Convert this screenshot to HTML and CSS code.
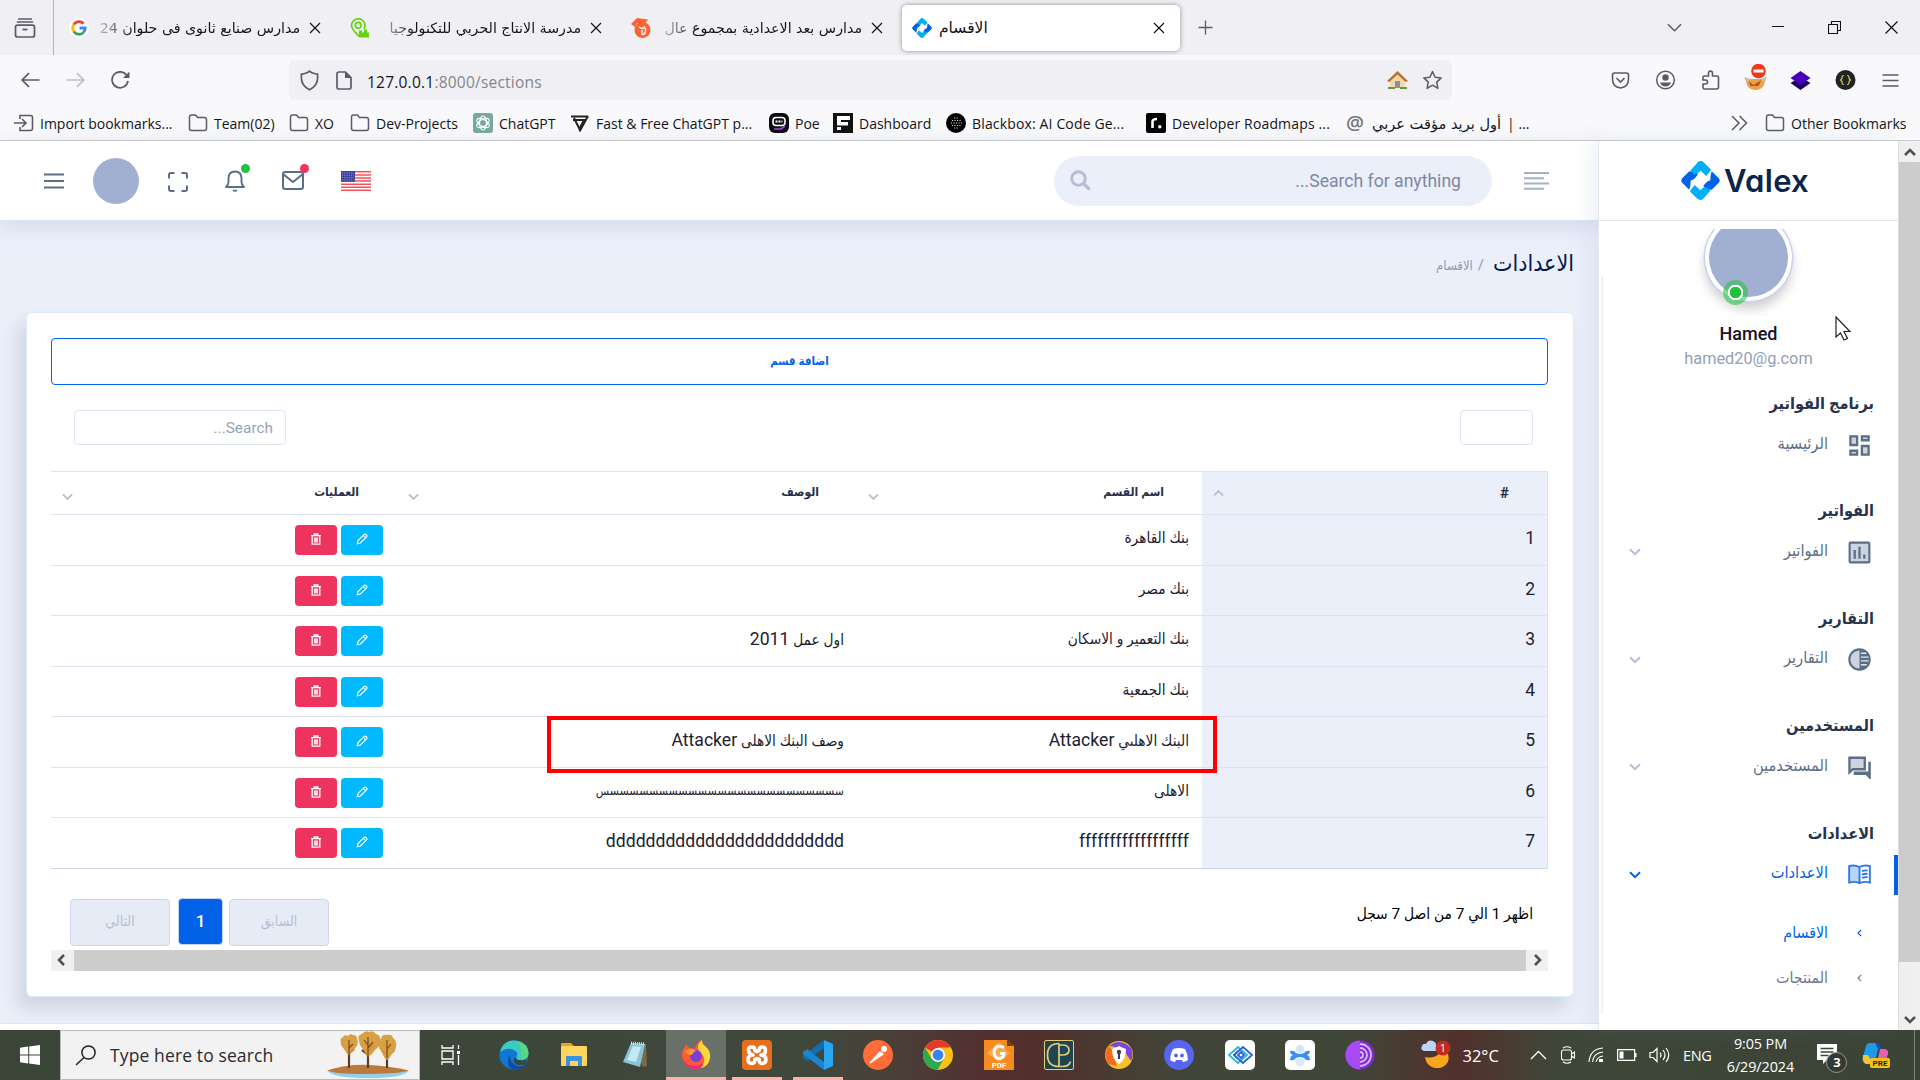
FILE: index.html
```html
<!DOCTYPE html>
<html lang="ar">
<head>
<meta charset="utf-8">
<title>الاقسام</title>
<link rel="stylesheet" href="styles.css">
</head>
<body>
<svg class="defs" width="0" height="0">
  <symbol id="x" viewBox="0 0 12 12"><path d="M1 1l10 10M11 1L1 11" fill="none" stroke="currentColor" stroke-width="1.2"/></symbol>
  <symbol id="folder" viewBox="0 0 20 20"><path d="M1.5 15.500V4.200Q1.500 2 3.700 2H7.500L9.500 4.500H16.300Q18.500 4.500 18.500 6.700V15.500Q18.500 17.500 16.300 17.500H3.700Q1.500 17.500 1.500 15.500Z" fill="none" stroke="#5b5b66" stroke-width="1.5"/></symbol>
  <symbol id="down" viewBox="0 0 12 8"><path d="M1 1.200l5 5 5-5" fill="none" stroke="currentColor" stroke-width="2"/></symbol>
  <symbol id="logo" viewBox="0 0 40 40"><path d="M20 0Q22 0 23.500 1.500L31 9 26 15.500 20 10 14 16 9.500 10 17 1.500Q18 0 20 0Z" fill="#00b0f2"/><path d="M20 40Q18 40 16.500 38.500L9 31 14 24.500 20 30 26 24 30.500 30 23 38.500Q22 40 20 40Z" fill="#00b0f2"/><path d="M8.500 10.500Q12 11 14 14Q17 12 17 14Q14 19 10 20Q10 25 8.500 29.500L1.500 22.500Q-1 20 1.500 17.500Z" fill="#0162e8"/><path d="M31.500 10.500L38.500 17.500Q41 20 38.500 22.500L31.500 29.500Q27 29 25 26.500Q23 27 23 25.500Q27 20 30 20Q30 14 31.500 10.500Z" fill="#0162e8"/></symbol>
  <symbol id="pencil" viewBox="0 0 12 12"><path d="M1.200 10.800l.8-3.200L8.200 1.400Q9 .7 9.800 1.400l.8.8Q11.300 3 10.600 3.800L4.400 10Z M7.400 2.400l2.200 2.200" fill="none" stroke="#fff" stroke-width="1.200"/></symbol>
  <symbol id="trash" viewBox="0 0 12 12"><path d="M1 2.600H11M4.200 2.400V1H7.800V2.400M2.200 2.800V11.200H9.800V2.800" fill="none" stroke="#fff" stroke-width="1.300"/><path d="M3.900 4.500h4.200v5H3.900z" fill="#fff" opacity=".85"/></symbol>
</svg>

<div class="tabs">
  <div class="firefox-view"><svg width="22" height="20" viewBox="0 0 22 20"><path d="M4 1h14M2.800 4h16.400M3.500 7.200h15q2 0 2 2v7.800q0 2-2 2h-15q-2 0-2-2V9.200q0-2 2-2z" fill="none" stroke="#5b5b66" stroke-width="1.700"/><path d="M8.500 11.500h5" stroke="#5b5b66" stroke-width="1.800"/></svg></div>
  <div class="tab">
    <svg class="fav" viewBox="0 0 20 20"><circle cx="10" cy="10" r="10" fill="#fff"/><g fill="none" stroke-width="2.800"><path d="M14.600 5.600A6.300 6.300 0 0 0 4.800 6.500" stroke="#ea4335"/><path d="M4.800 6.500A6.300 6.300 0 0 0 4.800 13.500" stroke="#fbbc05"/><path d="M4.800 13.500A6.300 6.300 0 0 0 14.200 14.700" stroke="#34a853"/><path d="M14.200 14.700Q16.300 13 16.200 10H10.500" stroke="#4285f4"/></g></svg>
    <span class="tab-text" dir="rtl">مدارس صنايع ثانوى فى حلوان 24</span><svg class="close"><use href="#x"/></svg>
  </div>
  <div class="tab">
    <svg class="fav" viewBox="0 0 20 20"><path d="M9 18.500C5 14 1.500 11 1.500 7.500a6.500 6.500 0 0 1 13.500 0q0 1.500-1 3.500" fill="none" stroke="#61d40c" stroke-width="1.700"/><circle cx="8.200" cy="7.300" r="2.900" fill="none" stroke="#61d40c" stroke-width="1.600"/><path d="M9 19.500v-7h3v2h2v-3h3v3h2v5z" fill="#61d40c"/></svg>
    <span class="tab-text" dir="rtl">مدرسة الانتاج الحربي للتكنولوجيا</span><svg class="close"><use href="#x"/></svg>
  </div>
  <div class="tab">
    <svg class="fav" viewBox="0 0 20 20"><circle cx="11.500" cy="12" r="8" fill="#fb6333"/><path d="M0 6L6 0l11 1.500-3 4-8-.5-2 4z" fill="#fb6333"/><path d="M8 8.500q3 4 6 0M11 12v5M14 10q2 4-2 7" fill="none" stroke="#f0f0f4" stroke-width="1.500"/></svg>
    <span class="tab-text" dir="rtl">مدارس بعد الاعدادية بمجموع عال</span><svg class="close"><use href="#x"/></svg>
  </div>
  <div class="tab tab-active">
    <svg class="fav"><use href="#logo"/></svg>
    <span class="tab-name">الاقسام</span><svg class="close"><use href="#x"/></svg>
  </div>
  <svg class="plus" viewBox="0 0 16 16"><path d="M8 .5v15M.5 8h15" stroke="#5b5b66" stroke-width="1.400"/></svg>
  <svg class="alltabs" viewBox="0 0 16 10"><path d="M1 1l7 7 7-7" fill="none" stroke="#5b5b66" stroke-width="1.500"/></svg>
  <div class="win">
    <svg width="12" height="12"><path d="M0 5.500h12" stroke="#111"/></svg>
    <svg width="13" height="13"><path d="M.5 3.500h9v9h-9zM3.500 3.500v-3h9v9h-3" fill="none" stroke="#111" stroke-width="1.100"/></svg>
    <svg width="13" height="13"><path d="M.5.5l12 12M12.500.5l-12 12" stroke="#111" stroke-width="1.200"/></svg>
  </div>
</div>

<div class="navbar">
  <div class="nav-buttons">
    <svg width="19" height="16" viewBox="0 0 19 16"><path d="M18.500 8H1.500M8 1.200L1.200 8 8 14.800" fill="none" stroke="#5b5b66" stroke-width="1.700"/></svg>
    <svg width="19" height="16" viewBox="0 0 19 16"><path d="M.5 8h17M11 1.200L17.800 8 11 14.800" fill="none" stroke="#bfbfc9" stroke-width="1.700"/></svg>
    <svg width="19" height="18" viewBox="0 0 19 18"><path d="M15.500 4A8 8 0 1 0 17 10" fill="none" stroke="#5b5b66" stroke-width="1.700"/><path d="M18.500.5V7h-6.500z" fill="#5b5b66"/></svg>
  </div>
  <div class="urlbar">
    <svg width="19" height="21" viewBox="0 0 19 21"><path d="M9.500 1.200Q12 3.600 17.600 4.200V8Q17.600 15.800 9.500 19.800Q1.400 15.800 1.400 8V4.200Q7 3.600 9.500 1.200Z" fill="none" stroke="#5b5b66" stroke-width="1.700"/></svg>
    <svg class="page-icon" width="16" height="19" viewBox="0 0 16 19"><path d="M3 1H9.500L15 6.500V16q0 2-2 2H3q-2 0-2-2V3Q1 1 3 1Z" fill="none" stroke="#5b5b66" stroke-width="1.700"/><path d="M9 1v6h6z" fill="#5b5b66"/></svg>
    <span class="url"><b>127.0.0.1</b>:8000/sections</span>
    <svg class="house" width="21" height="20" viewBox="0 0 21 20"><path d="M3 10v8h15v-8L10.500 3z" fill="#f3d9ad"/><path d="M0 11L10.500 1 21 11l-2.500 1L10.500 4.500 2.500 12z" fill="#b87333"/><path d="M8 18v-7h5v7z" fill="#8f8f98"/><path d="M1 17h7v2H1zM13 17h7v2h-7z" fill="#5f9e3c"/></svg>
    <svg width="21" height="20" viewBox="0 0 21 20"><path d="M10.500 1.500l2.600 5.700 6.100.7-4.500 4.200 1.200 6.200-5.400-3.100-5.400 3.100 1.200-6.200L1.800 7.900l6.100-.7z" fill="none" stroke="#5b5b66" stroke-width="1.500" stroke-linejoin="round"/></svg>
  </div>
  <div class="ext">
    <svg width="18" height="17" viewBox="0 0 18 17"><path d="M3 1h12q2 0 2 2v4q0 8-8 9-8-1-8-9V3q0-2 2-2zM5 6l4 4 4-4" fill="none" stroke="#5b5b66" stroke-width="1.600"/></svg>
    <svg width="20" height="20" viewBox="0 0 20 20"><circle cx="10" cy="10" r="8.800" fill="none" stroke="#5b5b66" stroke-width="1.500"/><circle cx="10" cy="7.500" r="3.200" fill="#5b5b66"/><path d="M4.500 12.500h11Q14 16.500 10 16.500T4.500 12.500z" fill="#5b5b66"/></svg>
    <svg width="18" height="20" viewBox="0 0 18 20"><path d="M7 6V3.500Q7 1 9 1t2 2.500V6h4.500q1.500 0 1.500 1.500V17q0 2-2 2H3q-1.500 0-1.500-1.500V14H4q2 0 2-2t-2-2H1.500V7.500Q1.500 6 3 6z" fill="none" stroke="#5b5b66" stroke-width="1.600"/></svg>
    <svg class="fox" width="24" height="26" viewBox="0 0 24 26"><path d="M1 13l5 2h12l5-2-3 9q-3 4-8 4t-8-4z" fill="#f0a04b"/><path d="M1 13l5 2-2 3zM23 13l-5 2 2 3z" fill="#c9c2b8"/><path d="M5 17l5 4 8-5-3 6H7z" fill="#a85b1d"/><circle cx="15" cy="7" r="7.300" fill="#f03a17"/><path d="M10 5.500h10v3H10z" fill="#fff"/></svg>
    <svg width="20" height="19" viewBox="0 0 20 19"><path d="M10 6l10 6-10 7-10-7z" fill="#1d0066"/><path d="M10 0l10 7-10 7L0 7z" fill="#4a00b8"/></svg>
    <svg width="20" height="20" viewBox="0 0 20 20"><circle cx="10" cy="10" r="10" fill="#1f2321"/><path d="M8.500 5.500q-2 0-2 1.500v1.500L5 10l1.500 1.500V13q0 1.500 2 1.500M11.500 5.500q2 0 2 1.500v1.500L15 10l-1.500 1.500V13q0 1.500-2 1.500" fill="none" stroke="#dcc84e" stroke-width="1.200"/></svg>
    <svg width="16" height="13" viewBox="0 0 16 13"><path d="M0 1h16M0 6.500h16M0 12h16" stroke="#5b5b66" stroke-width="1.500"/></svg>
  </div>
</div>

<div class="bookmarks">
  <div class="bm w1"><svg viewBox="0 0 20 20"><path d="M6 6V2.500h10.500q2 0 2 2v11q0 2-2 2H6V14M0 10h11M8 6l4 4-4 4" fill="none" stroke="#5b5b66" stroke-width="1.600"/></svg>Import bookmarks...</div>
  <div class="bm w2"><svg><use href="#folder"/></svg>Team(02)</div>
  <div class="bm w3"><svg><use href="#folder"/></svg>XO</div>
  <div class="bm w4"><svg><use href="#folder"/></svg>Dev-Projects</div>
  <div class="bm w5"><svg viewBox="0 0 20 20"><rect width="20" height="20" rx="3" fill="#74aa9c"/><g fill="none" stroke="#fff" stroke-width="1.100"><ellipse cx="10" cy="10" rx="3.500" ry="7"/><ellipse cx="10" cy="10" rx="3.500" ry="7" transform="rotate(60 10 10)"/><ellipse cx="10" cy="10" rx="3.500" ry="7" transform="rotate(120 10 10)"/></g></svg>ChatGPT</div>
  <div class="bm w6"><svg viewBox="0 0 20 20"><path d="M1 3.500h17M3 7h11L9.500 16 4 5M18 3L9.500 18.500" fill="none" stroke="#222" stroke-width="2"/></svg>Fast &amp; Free ChatGPT p...</div>
  <div class="bm w7"><svg viewBox="0 0 20 20"><rect width="20" height="20" rx="6" fill="#0b0b12"/><rect x="4" y="4.500" width="12" height="8" rx="3" fill="none" stroke="#fff" stroke-width="1.600"/><path d="M6.500 8.500h7" stroke="#fff" stroke-width="2" stroke-dasharray="2 1"/><path d="M5 16h7l4-3" stroke="#a04be0" stroke-width="1.700" fill="none"/></svg>Poe</div>
  <div class="bm w8"><svg viewBox="0 0 20 20"><path fill="#111" d="M0 0h20v20H0z"/><path d="M4 3h13v4H8v2h7v3.500H4zM4 14h4v3H4z" fill="#fff"/></svg>Dashboard</div>
  <div class="bm w9"><svg viewBox="0 0 20 20"><circle cx="10" cy="10" r="10" fill="#000"/><path d="M6 7.500h9M5 10h11M6 12.500h9M8 5h5M8 15h5" stroke="#ddd" stroke-width="1.100" stroke-dasharray="1.100 1.400"/></svg>Blackbox: AI Code Ge...</div>
  <div class="bm w10"><svg viewBox="0 0 20 20"><rect width="20" height="20" rx="2" fill="#000"/><path d="M6.500 15V8.500Q6.500 6 11 6" fill="none" stroke="#fff" stroke-width="2.600"/><circle cx="13.800" cy="13.800" r="1.700" fill="#fff"/></svg>Developer Roadmaps ...</div>
  <div class="bm w11"><span class="at">@</span><span class="bm-ar">أول بريد مؤقت عربي</span><span>| ...</span></div>
  <svg class="more" viewBox="0 0 17 16"><path d="M1 1l7 7-7 7M8.500 1l7 7-7 7" fill="none" stroke="#5b5b66" stroke-width="1.500"/></svg>
  <div class="bm"><svg><use href="#folder"/></svg>Other Bookmarks</div>
</div>

<div class="page">
  <div class="left">
    <header class="topbar">
      <svg width="20" height="16" viewBox="0 0 20 16"><path d="M0 1.500h20M0 8h20M0 14.500h20" stroke="#5b6e88" stroke-width="2"/></svg>
      <div class="avatar-sm"></div>
      <svg class="t-full" width="20" height="20" viewBox="0 0 20 20"><path d="M1 6.500V3q0-2 2-2h3.500M13.500 1H17q2 0 2 2v3.500M19 13.500V17q0 2-2 2h-3.500M6.500 19H3q-2 0-2-2v-3.500" fill="none" stroke="#5b6e88" stroke-width="2"/></svg>
      <div class="t-bell"><svg width="20" height="22" viewBox="0 0 20 22"><path d="M1 17h18q-2.500-2-2.500-5V8.500q0-7-6.500-7t-6.500 7V12q0 3-2.500 5zM8 20.200q2 1.300 4 0" fill="none" stroke="#5b6e88" stroke-width="1.900" stroke-linejoin="round"/></svg><i class="dot green"></i></div>
      <div class="t-mail"><svg width="22" height="19" viewBox="0 0 22 19"><path d="M3 1h16q2 0 2 2v13q0 2-2 2H3q-2 0-2-2V3q0-2 2-2zM1 3l10 8L21 3" fill="none" stroke="#5b6e88" stroke-width="2"/></svg><i class="dot pink"></i></div>
      <svg class="t-flag" width="30" height="20" viewBox="0 0 30 20"><path fill="#fff" d="M0 0h30v20H0z"/><path d="M0 .8h30M0 3.900h30M0 7h30M0 10.100h30M0 13.200h30M0 16.300h30M0 19.300h30" stroke="#fa4f55" stroke-width="1.500"/><path fill="#40439a" d="M0 0h14v10.800H0z"/><path d="M1 2h12M1 4.300h12M1 6.600h12M1 8.900h12" stroke="#a9abdb" stroke-width=".8" stroke-dasharray="1 1.300"/></svg>
      <div class="search-pill">
        <svg width="21" height="21" viewBox="0 0 21 21"><circle cx="8.500" cy="8.500" r="6.800" fill="none" stroke="#b4bdd3" stroke-width="3"/><path d="M13 13l6.500 6.500" stroke="#b4bdd3" stroke-width="3.400"/></svg>
        <span>...Search for anything</span>
      </div>
      <svg class="t-lines" width="25" height="18" viewBox="0 0 25 18"><path d="M0 1h25M0 6.300h20M0 11.500h25M0 16.800h20" stroke="#a5afca" stroke-width="2"/></svg>
    </header>
    <main dir="rtl">
      <div class="crumb"><h4>الاعدادات</h4><b>/</b><span>الاقسام</span></div>
      <section class="card">
        <a class="add">اضافة قسم</a>
        <div class="filters"><div class="select"></div><div class="search" dir="ltr">...Search</div></div>
        <div class="table">
          <div class="tr th"><div class="td num">#<svg class="sort up"><use href="#down"/></svg></div><div class="td">اسم القسم<svg class="sort"><use href="#down"/></svg></div><div class="td">الوصف<svg class="sort"><use href="#down"/></svg></div><div class="td">العمليات<svg class="sort"><use href="#down"/></svg></div></div>
          <div class="tr"><div class="td num">1</div><div class="td">بنك القاهرة</div><div class="td"></div><div class="td ops"><a class="edit"><svg><use href="#pencil"/></svg></a><a class="del"><svg><use href="#trash"/></svg></a></div></div>
          <div class="tr"><div class="td num">2</div><div class="td">بنك مصر</div><div class="td"></div><div class="td ops"><a class="edit"><svg><use href="#pencil"/></svg></a><a class="del"><svg><use href="#trash"/></svg></a></div></div>
          <div class="tr"><div class="td num">3</div><div class="td">بنك التعمير و الاسكان</div><div class="td">اول عمل <span class="lat">2011</span></div><div class="td ops"><a class="edit"><svg><use href="#pencil"/></svg></a><a class="del"><svg><use href="#trash"/></svg></a></div></div>
          <div class="tr"><div class="td num">4</div><div class="td">بنك الجمعية</div><div class="td"></div><div class="td ops"><a class="edit"><svg><use href="#pencil"/></svg></a><a class="del"><svg><use href="#trash"/></svg></a></div></div>
          <div class="tr"><div class="td num">5</div><div class="td">البنك الاهلىي <span class="lat">Attacker</span></div><div class="td">وصف البنك الاهلى <span class="lat">Attacker</span></div><div class="td ops"><a class="edit"><svg><use href="#pencil"/></svg></a><a class="del"><svg><use href="#trash"/></svg></a></div></div>
          <div class="tr"><div class="td num">6</div><div class="td">الاهلى</div><div class="td seen">سسسسسسسسسسسسسسسسسسسسسسسسس</div><div class="td ops"><a class="edit"><svg><use href="#pencil"/></svg></a><a class="del"><svg><use href="#trash"/></svg></a></div></div>
          <div class="tr"><div class="td num">7</div><div class="td"><span class="lat">ffffffffffffffffff</span></div><div class="td"><span class="lat">dddddddddddddddddddddddd</span></div><div class="td ops"><a class="edit"><svg><use href="#pencil"/></svg></a><a class="del"><svg><use href="#trash"/></svg></a></div></div>
          <div class="mark"></div>
        </div>
        <div class="foot">
          <span class="info">اظهر 1 الي 7 من اصل 7 سجل</span>
          <div class="pager"><a class="off">السابق</a><a class="cur">1</a><a class="off">التالي</a></div>
        </div>
        <div class="hscroll" dir="ltr"><svg viewBox="0 0 8 12"><path d="M7 1L2 6l5 5" fill="none" stroke="#505050" stroke-width="2.500"/></svg><i></i><svg viewBox="0 0 8 12"><path d="M1 1l5 5-5 5" fill="none" stroke="#505050" stroke-width="2.500"/></svg></div>
      </section>
    </main>
    <div class="page-foot"></div>
  </div>

  <aside class="sidebar" dir="rtl">
    <div class="brand" dir="ltr"><svg width="39" height="39"><use href="#logo"/></svg><span>Valex</span></div>
    <div class="user"><div class="avatar"></div><i class="status"></i></div>
    <div class="uname">Hamed</div>
    <div class="umail">hamed20@g.com</div>
    <nav>
      <h5>برنامج الفواتير</h5>
      <a class="item"><svg viewBox="0 0 24 24"><path d="M2.500 2.500h7v9h-7zM14.500 2.500h7v4h-7zM14.500 12.500h7v9h-7zM2.500 17.500h7v4h-7z" fill="#cdd4dd" stroke="#5b6e88" stroke-width="2.400"/></svg><span>الرئيسية</span></a>
      <h5>الفواتير</h5>
      <a class="item"><svg viewBox="0 0 24 24"><rect x="1.700" y="1.700" width="20.600" height="20.600" rx="1" fill="#cdd4dd" stroke="#5b6e88" stroke-width="2.200"/><path d="M7 9.500v9M12 6v12.500M17 14v4.500" stroke="#5b6e88" stroke-width="2.400"/></svg><span>الفواتير</span><svg class="chev"><use href="#down"/></svg></a>
      <h5>التقارير</h5>
      <a class="item"><svg viewBox="0 0 24 24"><circle cx="12" cy="12" r="10.600" fill="#cdd4dd" stroke="#5b6e88" stroke-width="2.200"/><path d="M12 1v22A11 11 0 0 0 12 1z" fill="#5b6e88"/><path d="M13.500 5.500h5.500M13.500 9.500h8M13.500 13.500h8M13.500 17.500h6" stroke="#e3e7ec" stroke-width="1.400"/></svg><span>التقارير</span><svg class="chev"><use href="#down"/></svg></a>
      <h5>المستخدمين</h5>
      <a class="item"><svg viewBox="0 0 24 24"><path d="M1.500 1.800h16v12H5L1.500 17z" fill="#cdd4dd" stroke="#5b6e88" stroke-width="2.400"/><path d="M22.500 6v16l-3.500-3.500H6M6 17.500h16" fill="none" stroke="#5b6e88" stroke-width="2.600"/></svg><span>المستخدمين</span><svg class="chev"><use href="#down"/></svg></a>
      <h5>الاعدادات</h5>
      <a class="item on"><svg viewBox="0 0 24 24"><path d="M12 4.200Q7 1.800 1.200 3.200V20Q7 18.800 12 21z" fill="#bcd4f8"/><path d="M12 4.200Q7 1.800 1.200 3.200V20.300Q7 18.800 12 21 17 18.800 22.800 20.300V3.200Q17 1.800 12 4.200zM12 4v17M14.500 8.500q3-1 6-.7M14.500 12q3-1 6-.7M14.500 15.500q3-1 6-.7" fill="none" stroke="#2b7bf0" stroke-width="2"/></svg><span>الاعدادات</span><svg class="chev"><use href="#down"/></svg></a>
      <a class="sub on"><svg viewBox="0 0 5 8"><path d="M4.200.8L1 4l3.200 3.200" fill="none" stroke="currentColor" stroke-width="1.200"/></svg><span>الاقسام</span></a>
      <a class="sub"><svg viewBox="0 0 5 8"><path d="M4.200.8L1 4l3.200 3.200" fill="none" stroke="currentColor" stroke-width="1.200"/></svg><span>المنتجات</span></a>
    </nav>
    <div class="side-line"></div>
  </aside>
  <div class="vscroll"><svg viewBox="0 0 12 8"><path d="M1 7l5-5 5 5" fill="none" stroke="#505050" stroke-width="2.500"/></svg><i></i><svg class="dn" viewBox="0 0 12 8"><path d="M1 1l5 5 5-5" fill="none" stroke="#505050" stroke-width="2.500"/></svg></div>
</div>

<div class="taskbar">
  <div class="start"><svg width="20" height="20" viewBox="0 0 20 20"><path d="M0 2.800L8.200 1.600V9.500H0zM9.200 1.500L20 0v9.500H9.200zM0 10.500h8.200v8L0 17.300zM9.200 10.500H20V20L9.200 18.500z" fill="#fff"/></svg></div>
  <div class="tsearch">
    <svg width="22" height="21" viewBox="0 0 22 21"><circle cx="13.500" cy="7.500" r="6.600" fill="none" stroke="#222" stroke-width="1.500"/><path d="M9 12.500L1 20" stroke="#222" stroke-width="1.500"/></svg>
    <span>Type here to search</span>
    <svg width="82" height="48" viewBox="0 0 82 48"><path d="M1 40h80q-4 7-40 7T1 40z" fill="#8fd0ee"/><path d="M0 39.500Q20 33 42 34t40 5.500q-8 3-40 3.500T0 39.500z" fill="#b97a3c"/><path d="M22 37V16M41 37V10M60 37V18M22 22l5-4M41 20l6-6M41 24l-6-5M60 24l-5-4" stroke="#5f3a22" stroke-width="2.200"/><path d="M14 11q-2-3 2-5 1-3 5-1 2-3 5-1 4 0 4 4 2 4-1 8-3 5-7 8-3-2-5-6-4-3-3-7zM32 9q-2-5 3-6 3-4 7-2 4-2 7 2 5 1 4 7 0 6-5 9-3 5-7 7-3-3-5-8-4-4-4-9zM52 14q-2-5 2-6 1-5 6-4 5-1 6 3 4 3 3 8 0 5-4 8-2 4-5 6-4-3-5-8-4-3-3-7z" fill="#d69b39" opacity=".95"/><path d="M22 9v16M41 6v20M60 9v18M41 17l5-6M41 14l-4-5M22 17l4-4M60 18l4-5" stroke="#7a4a20" stroke-width="1.200"/></svg>
  </div>
  <div class="app tv"><svg width="20" height="20" viewBox="0 0 20 20"><path d="M1 0v3h11V0M1 20v-3h11v3M1 6h11v8H1zM17.500 0v4M17.500 10v10" fill="none" stroke="#fff" stroke-width="1.300"/><path d="M16 6h3v3h-3z" fill="#fff"/></svg></div>
  <div class="app"><svg viewBox="0 0 30 30"><circle cx="15" cy="15" r="14.500" fill="#1277d4"/><path d="M1 12Q4 0 16 .5 29 2 29.500 13q0 7-8 7-5 0-4-3 2-4-1-6Q9 6 1 12z" fill="#3ccbc0"/><path d="M18 1q11 3 11.500 12 0 7-8 7 3-7-3-19z" fill="#65dc6a" opacity=".7"/><path d="M11 14q-1 9 7 12 5 1 9-2-6 7-14 5Q6 26 11 14z" fill="#0c4f9e"/><path d="M17 17q-1 3 5 3.500 5 0 6-2l-1 5q-6 3-11 0-3-4 1-6.500z" fill="#3c4539"/></svg></div>
  <div class="app"><svg viewBox="0 0 30 30"><path d="M2 6V4q0-1 1-1h9l3 3z" fill="#e5a80f"/><rect x="2" y="6" width="26" height="20" rx="1" fill="#ffd45f"/><path d="M7 26v-9q0-1 1-1h14q1 0 1 1v9h-4v-5h-8v5z" fill="#3b93dd"/></svg></div>
  <div class="app"><svg viewBox="0 0 30 30"><path d="M12 3l14 1 1 22-4 1z" fill="#7b6a4a"/><path d="M11 3l14 1-5 23L3 22z" fill="#86c5d6"/><path d="M13 6l8 1-5 15-9-2z" fill="#c4e9f1"/><path d="M11 3l14 1" stroke="#ddd" stroke-width="3" stroke-dasharray="1 1"/></svg></div>
  <div class="app run focus"><svg viewBox="0 0 30 30"><path d="M15 29Q1 28 1 14 2 8 6 4q0 3 3 4 3 0 5 1 1-7 7-9 0 4 3 6 6 5 5 12-2 10-14 11z" fill="#ff5a36"/><path d="M21 0q0 4 3 6 6 5 5 12-1 8-9 10 6-8 1-14-4-3-4-6 0-5 4-8z" fill="#ffd63a"/><circle cx="15" cy="16" r="6" fill="#7b3fd3"/><path d="M1 14q2 12 13 12 6 0 8-4 0 7-7 7Q2 28 1 14z" fill="#f4237a"/><path d="M4 11q6-4 11 0-3 1-4 4-5 0-7-4z" fill="#ff9a2f"/></svg></div>
  <div class="app run"><svg viewBox="0 0 30 30"><rect width="30" height="30" rx="4" fill="#e76f1c"/><path d="M10.500 7Q6 6.500 6.500 10.500T11 15Q6 15.500 6 19.500T10.500 23.500Q13 23 12.800 19.500 15 17.800 17.200 19.500 17 23 19.500 23.500 24 23.500 24 19.500T19 15Q23.500 14.500 23.500 10.500T19.500 7Q17 7.500 17.200 10.500 15 12.500 12.800 10.500 13 7.500 10.500 7z" fill="none" stroke="#fff" stroke-width="3.600" stroke-linejoin="round"/></svg></div>
  <div class="app run"><svg viewBox="0 0 30 30"><path d="M21 0v8L4 21l-4-3v-2z" fill="#0f6fb3"/><path d="M0 12l4-3 17 13v8L0 14z" fill="#1b86cf"/><path d="M21 0l9 4v22l-9 4z" fill="#2aa5f3"/></svg></div>
  <div class="app"><svg viewBox="0 0 30 30"><circle cx="15" cy="15" r="15" fill="#ff6c37"/><path d="M7 23l10-11 3 2z" fill="#fff" stroke="#fff" stroke-width="1.500"/><circle cx="21" cy="9" r="3" fill="#fff"/></svg></div>
  <div class="app"><svg viewBox="0 0 30 30"><circle cx="15" cy="15" r="15" fill="#fbc116"/><path d="M15 15L2 7.500A15 15 0 0 1 28 7.500H15z" fill="#e33b2e"/><path d="M2 7.500A15 15 0 0 0 14.500 30L21 18.500 8.500 18.500z" fill="#2da94f"/><circle cx="15" cy="15" r="7" fill="#fff"/><circle cx="15" cy="15" r="5.400" fill="#3b82f0"/></svg></div>
  <div class="app"><svg viewBox="0 0 30 30"><path d="M0 0h23l7 6v24H0z" fill="#f68b1f"/><path d="M23 0v6h7z" fill="#7a3a10"/><path d="M15 2l11 11-11 9L3 13z" fill="#faa850"/><path d="M20 7.500q-8-4-10 4 0 7 6 7 4-1 4-5h-4" fill="none" stroke="#fff" stroke-width="3"/><text x="15" y="28" class="pdf">PDF</text></svg></div>
  <div class="app"><svg viewBox="0 0 30 30"><rect x=".5" y=".5" width="29" height="29" rx="1.500" fill="#1f4650" stroke="#e6cb7a"/><path d="M15 3.500Q3.500 3.500 3.500 15T15 26.500M15 3.500v23M15 5h3q7 0 7 5t-7 5h-3M15 26.500h4q6 0 7.500-5" fill="none" stroke="#e6cb7a" stroke-width="1.700"/></svg></div>
  <div class="app"><svg viewBox="0 0 30 30"><circle cx="15" cy="15" r="14" fill="#f7c02c"/><path d="M5 6Q16-3 27 8q3 8 0 13L18 8z" fill="#7b46e0"/><path d="M5 6Q-2 15 4 24l9 2L8 10z" fill="#f36c21"/><path d="M15 6q4 2 7 3 0 11-7 15Q8 20 8 9q4-1 7-3z" fill="#fff"/><circle cx="15" cy="12" r="2.200" fill="#3d3b66"/><path d="M14 13h2v6h-2z" fill="#3d3b66"/></svg></div>
  <div class="app"><svg viewBox="0 0 30 30"><circle cx="15" cy="15" r="15" fill="#5865f2"/><path d="M9 9q6-2 12 0 3 5 3 11-3 2-5 2l-1-2h-6l-1 2q-2 0-5-2 0-6 3-11z" fill="#fff"/><circle cx="12" cy="15.500" r="1.900" fill="#5865f2"/><circle cx="18" cy="15.500" r="1.900" fill="#5865f2"/></svg></div>
  <div class="app"><svg viewBox="0 0 30 30"><rect width="30" height="30" rx="5" fill="#fff"/><path d="M13 7l-9 8 9 8 9-8zM13 11l-4 4 4 4" fill="none" stroke="#28b8d8" stroke-width="1.800"/><path d="M18 7l9 8-9 8-9-8zM16 12l3 3-3 3-3-3z" fill="none" stroke="#2a62dc" stroke-width="1.800"/></svg></div>
  <div class="app"><svg viewBox="0 0 30 30"><rect width="30" height="30" rx="5" fill="#fff"/><circle cx="15" cy="9" r="4" fill="#cfe6fc"/><circle cx="15" cy="22" r="4.500" fill="#d9e9fd"/><path d="M5 11q4-1 6 2 4 2 8 0 2-3 6-2-1 4-3 4 3 1 3 5-4 1-6-2-4-2-8 0-2 3-6 2 0-4 3-5-3-1-3-4z" fill="#3d8df2"/></svg></div>
  <div class="app"><svg viewBox="0 0 30 30"><circle cx="15" cy="15" r="14.500" fill="#7d2cd6"/><path d="M15 .5a14.500 14.500 0 0 0 0 29z" fill="#a94af5"/><path d="M15 4a11 11 0 0 1 0 22M15 8a7 7 0 0 1 0 14M15 12a3 3 0 0 1 0 6" fill="none" stroke="#dcb6fb" stroke-width="1.800"/></svg></div>
  <div class="weather"><svg width="30" height="30" viewBox="0 0 30 30"><path d="M4 17q8 2 14-3 5-3 9 0 3 10-8 14Q6 29 4 17z" fill="#f9a51e"/><path d="M3 11q-4-1-2-5 1-3 4-2 2-5 7-3 4 2 3 5 5 1 3 5z" fill="#b9d4f7"/><circle cx="22" cy="8" r="7.500" fill="#c42b1c"/><text x="22" y="12" class="w-num">1</text></svg><span>32°C</span></div>
  <div class="tray">
    <svg width="17" height="10" viewBox="0 0 17 10"><path d="M1 9l7.500-7.500L16 9" fill="none" stroke="#fff" stroke-width="1.300"/></svg>
    <svg width="16" height="18" viewBox="0 0 16 18"><path d="M3.500 4h6q2 0 2 2v6q0 2-2 2h-6q-2 0-2-2V6q0-2 2-2zM11.500 8l3-2v6l-3-2M3 2q4-2.500 8 0M3 16q4 2.500 8 0" fill="none" stroke="#fff" stroke-width="1.100"/></svg>
    <svg width="16" height="16" viewBox="0 0 16 16"><path d="M1 15Q2 2 15 1M4.500 15Q5.500 6 15 5M8 15q1-5 7-6" fill="none" stroke="#fff" stroke-width="1.100"/><path d="M11 12h4v3h-4z" fill="#fff"/></svg>
    <svg width="20" height="12" viewBox="0 0 20 12"><path d="M.6.600h17v10.800H.6z" fill="none" stroke="#fff" stroke-width="1.200"/><path d="M2.500 2.500h4v7h-4zM18 4h1.500v4H18z" fill="#fff"/></svg>
    <svg width="21" height="16" viewBox="0 0 21 16"><path d="M1 5.500h3l4-4v13l-4-4H1zM11 5.500q2 2.500 0 5M14 3q4 5 0 10M17 1q5.500 7 0 14" fill="none" stroke="#fff" stroke-width="1.200"/></svg>
    <span>ENG</span>
  </div>
  <div class="clock"><div>9:05 PM</div><div>6/29/2024</div></div>
  <div class="notif"><svg width="20" height="20" viewBox="0 0 20 20"><path d="M0 0h20v16H10l-4 4v-4H0z" fill="#fff"/><path d="M3.500 4.500h13M3.500 8h13M3.500 11.500h8" stroke="#3c4539" stroke-width="1.300"/></svg><b>3</b></div>
  <svg class="copilot" width="28" height="26" viewBox="0 0 28 26"><path d="M7 1h6q3 0 4 3l-4 15q-1 3-4 3H4q-5-2-3-7L4 4q1-3 3-3z" fill="#1e9ae8"/><path d="M1 13h5l5 9H4q-4-2-3-9z" fill="#f3c631"/><path d="M13 1q4 1 4 6h6q4 1 3 5l-3 10h-9l4-14z" fill="#e460b4"/><path d="M13 1q5-1 6 6h-3z" fill="#1653b0"/><rect x="8" y="16" width="20" height="10" rx="2" fill="#f9c316"/><text x="18" y="24.200" class="pre">PRE</text></svg>
  <div class="peek"></div>
</div>
<svg class="cursor" width="17" height="26" viewBox="0 0 17 26"><path d="M1 1v20l4.500-4 3.500 7 3.500-1.500L9 15.500h6z" fill="#fff" stroke="#222" stroke-width="1.200"/></svg>
</body>
</html>
```
FILE: styles.css
```css
*{box-sizing:border-box}
body{margin:0;width:1920px;height:1080px;overflow:hidden;display:flex;flex-direction:column;background:#fff;font-family:Roboto,"DejaVu Sans Condensed","DejaVu Sans",sans-serif;position:relative}
svg{flex:none;display:block}
.defs{position:absolute}
h4,h5{margin:0}

/* browser chrome */
.tabs{height:55px;background:#f0f0f4;display:flex;align-items:center;font:14.200px "DejaVu Sans",sans-serif;color:#15141a}
.firefox-view{width:54px;height:55px;border-right:1px solid #b4b4bc;padding:18px 0 0 14px}
.tab{width:281px;height:46px;display:flex;align-items:center;padding-left:15px}
.fav{width:20px;height:20px;margin-right:7px}
.tab-text{width:204px;white-space:nowrap;-webkit-mask-image:linear-gradient(90deg,rgba(0,0,0,.15),#000 38px);mask-image:linear-gradient(90deg,rgba(0,0,0,.15),#000 38px)}
.close{width:12px;height:12px;margin-left:9px;color:#15141a}
.tab-active{width:278px;background:#fff;border-radius:5px;box-shadow:0 0 5px rgba(0,0,0,.4);margin-left:5px;padding-left:10px;padding-right:15px}
.tab-name{flex:1;font-size:15.500px}
.plus{width:15px;height:15px;margin-left:18px}
.alltabs{width:15px;height:10px;margin-left:454px;margin-right:68px}
.win{display:flex}
.win svg{margin:0 22px}
.navbar{height:50px;background:#f9f9fb;display:flex;align-items:center}
.nav-buttons{width:289px;display:flex;gap:26px;padding-left:21px;align-items:center}
.urlbar{width:1163px;height:40px;border-radius:5px;background:#f0f0f4;display:flex;align-items:center;padding:0 9px 0 11px}
.page-icon{margin-left:17px}
.url{flex:1;margin-left:15px;padding-top:3px;font:15.500px "Open Sans","Noto Sans",sans-serif;color:#84848c;letter-spacing:.22px}
.url b{font-weight:400;color:#15141a}
.house{margin-right:14px}
.ext{display:flex;margin-left:145.500px;align-items:center}
.ext svg{width:45px}
.ext .fox{margin-top:-6px}
.bookmarks{height:36px;background:#f9f9fb;border-bottom:1px solid #ccc;display:flex;align-items:center;padding:1px 0 0 14px;font:14px "Open Sans","Noto Sans",sans-serif;color:#15141a;white-space:nowrap}
.bm{display:flex;align-items:center;gap:6px;flex:none}
.bm svg{width:20px;height:20px}
.w1{width:174px}.w2{width:101px}.w3{width:61px}.w4{width:123px}.w5{width:97px}.w6{width:199px}.w7{width:64px}.w8{width:113px}.w9{width:200px;letter-spacing:.15px}.w10{width:201px;letter-spacing:.15px}.w11{width:384px}
.at{font-size:20px;font-weight:600;color:#777;width:20px;line-height:20px;margin-left:-1px}
.bm-ar{font:14.600px "DejaVu Sans",sans-serif}
.more{width:17px;height:16px;margin-right:17px}

/* page */
.page{height:889px;display:flex}
.left{width:1598px;display:flex;flex-direction:column;background:#ebeffa}
.topbar{height:80px;background:#fff;border-bottom:1px solid #dde3f0;display:flex;align-items:center;padding-left:44px;box-shadow:0 5px 20px rgba(130,145,190,.24);z-index:1}
.avatar-sm{width:46px;height:46px;border-radius:50%;background:#a1afd2;margin-left:29px}
.t-full{margin-left:29px;margin-top:2px}
.t-bell,.t-mail{position:relative;margin-left:37px}
.dot{position:absolute;width:9px;height:9px;border-radius:50%;top:-7px;right:-5px}
.t-bell .dot{top:-6px}
.green{background:#22c03c}.pink{background:#f0335d}
.t-flag{margin-left:37px}
.search-pill{width:438px;height:50px;border-radius:25px;background:#ebeffa;margin-left:683px;display:flex;align-items:center;justify-content:space-between;padding:0 31px 0 16px;font-size:17.600px;color:#7d88a6}
.t-lines{margin-left:32px}
main{height:802px;padding:30px 24px 0 26px}
.crumb{height:61px;display:flex;align-items:center;color:#8f9ab5;font-size:13px;padding-bottom:33px}
.crumb h4{font-size:23px;line-height:28px;margin-top:-2px;font-weight:500;color:#031b4e;margin-left:9px}
.crumb b{font-weight:400;font-size:15px;margin-left:5px}
.card{height:685px;background:#fff;border:1px solid #deebfd;border-radius:6px;box-shadow:-8px 12px 18px rgba(25,42,70,.13);padding:25px 25px 0 24px}
.add{display:flex;align-items:center;justify-content:center;height:47px;padding-bottom:2px;border:1px solid #0162e8;border-radius:4px;color:#0162e8;font-size:11.500px;font-weight:700}
.filters{display:flex;justify-content:space-between;padding:25px 15px 26px 23px}
.select,.search{height:35px;border:1px solid #e1e6f6;border-radius:4px}
.select{width:73px}
.search{width:212px;padding:8px 12px;text-align:right;font-size:15.400px;line-height:19px;color:#97a2bb}
.table{position:relative;border-top:1px solid #dde2ef;color:#1d212f}
.tr{height:50.500px;display:grid;grid-template-columns:346px 345px 460px 346px;border-bottom:1px solid #dde2ef}
.tr:nth-child(8){border-color:#cdd5e9}
.tr.th{height:43px;font-weight:700;color:#242f48}
.td{padding:11px 13px 0 0;font-size:15.300px;line-height:24px}
.lat{font-size:17.600px}
.num{background:#ebeffa;border-right:1px solid #dde2ef;font-size:17.500px;padding-right:12px}
.td:nth-child(3){padding-right:13px}
.td.seen{font-size:12.200px}
.th .td{font-size:12px;padding:8px 38px 0 0;position:relative}
.th .num{font-size:15px;padding-top:9px}
.sort{position:absolute;left:11px;bottom:13px;width:11px;height:8px;color:#b9bfcc}
.up{transform:rotate(180deg);bottom:17px}
.td.ops{display:flex;gap:4px;padding:10px 14px 0 0}
.ops a{width:42px;height:30px;border-radius:4px;display:flex;justify-content:center;padding-top:8px}
.ops svg{width:12px;height:12px}
.edit{background:#00b9ff}.del{background:#ee335e}
.mark{position:absolute;left:496px;top:244px;width:670px;height:57px;border:4px solid #f00}
.foot{display:flex;justify-content:space-between;padding:29px 15px 0 19px;height:81px}
.info{font-size:15.400px;margin-top:7px}
.pager{display:flex;gap:7px}
.pager a{display:flex;align-items:center;justify-content:center;height:47px;border-radius:4px}
.pager .off{width:100px;border:1px solid #cdd7ee;background:#e7ebf5;color:#b4bfd8;font-size:14px;margin-top:1px;padding-bottom:2px}
.pager .cur{width:45px;margin:0 -1px 0 1px;background:#0162e8;border:1px solid #c4d5f3;color:#fff;font-weight:500;font-size:17px}
.hscroll{height:21px;background:#f0f0f0;display:flex;align-items:center;justify-content:space-between;padding:0 6px}
.hscroll i{width:1452px;height:21px;background:#cdcdcd}
.hscroll svg{width:8px;height:12px}
.page-foot{flex:1;background:#fff;border-top:1px solid #dde6f6}

.sidebar{width:301px;background:#fff;border-left:1px solid #e4e6f0;border-right:1px solid #ddd;position:relative;box-shadow:-8px 0 20px rgba(130,145,190,.13);z-index:2}
.brand{height:80px;border-bottom:1px solid #e4e6f0;display:flex;align-items:center;padding-left:82px;gap:4px;font:600 31px Inter,sans-serif;font-feature-settings:"cv11";letter-spacing:.3px;color:#0b2449}
.user{height:88px;margin-top:8px;overflow:hidden;position:relative}
.avatar{width:79px;height:79px;border-radius:50%;background:#a1afd2;margin:-11px auto 0;box-shadow:0 0 0 4px #fff,0 0 0 5.500px #c9d3ef,0 8px 12px 4px rgba(0,0,0,.2)}
.status{position:absolute;left:124px;top:51px;width:25px;height:25px;border-radius:50%;background:radial-gradient(#22c03c 5.500px,#fff 6px,#fff 7.500px,rgba(34,192,60,.55) 8px)}
.uname{text-align:center;font-size:18px;font-weight:500;color:#14112d;line-height:24px;margin-top:5px}
.umail{text-align:center;font-size:16.300px;color:#949eb7;line-height:24px;margin-top:1px}
nav{padding-top:15px}
nav h5{height:39px;line-height:36px;padding-right:24px;font-size:16.200px;font-weight:700;color:#28344f}
.item{display:flex;align-items:center;height:40px;margin-bottom:28.400px;padding:0 27px 0 30px;color:#5b6e88;font-size:16.300px}
.item>svg:first-child{width:23px;height:23px}
.item span{flex:1;margin-right:20px;margin-top:-4px}
.item .chev{width:12px;height:8px;color:#b4bfd5}
.on,.item.on .chev{color:#0162e8}
.item.on{box-shadow:inset -4px 0 #0162e8;margin-bottom:15.500px}
.sub{display:flex;align-items:center;height:45px;padding-right:36px;font-size:15.800px;color:#6d7890}
.sub.on{color:#0162e8}
.sub svg{width:5px;height:8px;margin-left:29px}
.side-line{position:absolute;left:2px;top:135px;width:2px;height:738px;background:#f1f1f3}
.vscroll{width:21px;background:#f0f0f0;display:flex;flex-direction:column;align-items:center}
.vscroll svg{width:12px;height:8px;margin:7px 0 6px}
.vscroll i{width:21px;height:800px;background:#cdcdcd}
.vscroll .dn{margin-top:auto;margin-bottom:6px}

/* taskbar */
.taskbar{height:50px;display:flex;align-items:center;color:#fff;background:linear-gradient(90deg,#3b4537 0,#3f483b 42%,#49403a 46%,#532e2e 52%,#522f2d 54%,#414537 61%,#3f4739 70%,#52302c 76%,#3f4739 81%,#3b4336 100%);font-family:"Open Sans","Noto Sans",sans-serif}
.start{width:60px;padding-left:20px}
.tsearch{width:360px;height:50px;background:#f2f2f2;border:1px solid #bbb;display:flex;align-items:center;padding-left:14px;color:#2b2b2b;font-size:17.500px;letter-spacing:.12px}
.tsearch span{width:217px;margin-left:13px}
.app{width:60.300px;height:50px;display:flex;align-items:center;justify-content:center;flex:none}
.app svg{width:30px;height:30px}
.app.tv{width:62px}
.app.tv svg{width:20px;height:20px}
.app.tv+.app{margin-left:2px}
.run{background:linear-gradient(#ffb0ac,#ffb0ac) center bottom/50px 3px no-repeat}
.app.focus{margin:0 1px;background:linear-gradient(#ffb0ac,#ffb0ac) bottom/100% 3px no-repeat,#687067}
.pdf{font:700 8px Roboto,sans-serif;fill:#fff;text-anchor:middle}
.pre{font:700 8px Roboto,sans-serif;fill:#222;text-anchor:middle}
.w-num{font:11px "Open Sans",sans-serif;fill:#fff;text-anchor:middle}
.weather{display:flex;align-items:center;gap:11px;margin-left:31px;width:109px;font-size:16.500px;flex:none}
.tray{display:flex;align-items:center;gap:12.500px;width:188px;font-size:14.500px;letter-spacing:-.3px;flex:none}
.clock{width:84px;flex:none;text-align:center;font-size:14.400px;line-height:23px;letter-spacing:-.1px}
.notif{position:relative;margin-left:15px;width:45px;padding-bottom:2px;flex:none}
.notif b{position:absolute;left:9px;top:8px;width:21px;height:21px;border:1px solid #999;border-radius:50%;background:#333a33;font-size:13px;line-height:19px;text-align:center}
.peek{width:1px;height:50px;background:#7b8078;margin-left:auto;margin-right:5px}
.cursor{position:absolute;left:1835px;top:316px;z-index:5}
```
